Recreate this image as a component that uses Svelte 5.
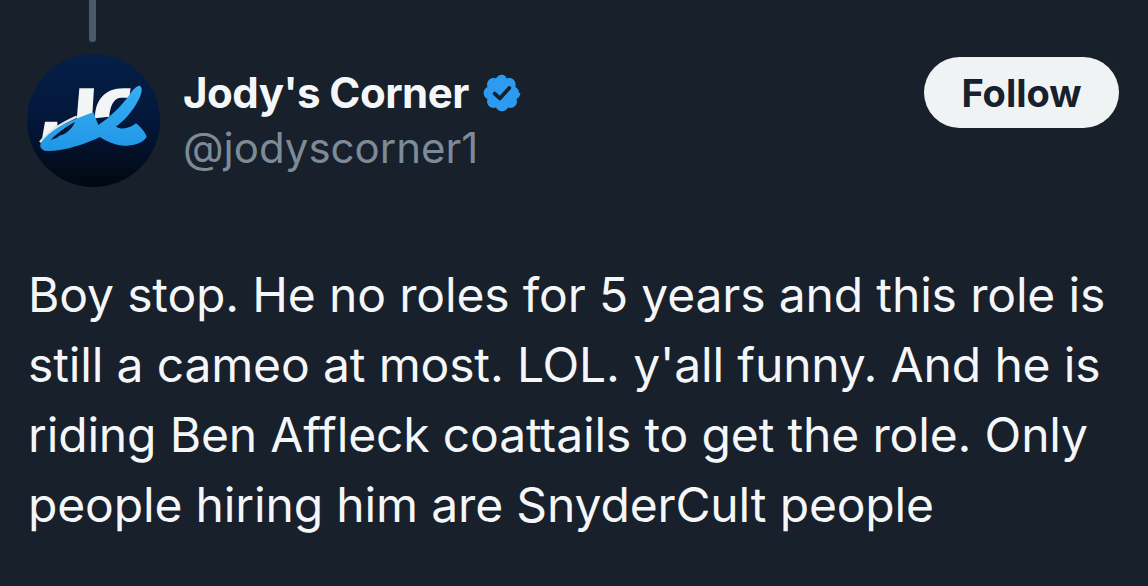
<script>
    let lines = [
        "Boy stop. He no roles for 5 years and this role is",
        "still a cameo at most. LOL. y'all funny. And he is",
        "riding Ben Affleck coattails to get the role. Only",
        "people hiring him are SnyderCult people",
    ];
</script>

<div class="tweet">
    <div class="thread-line"></div>
    <div class="header">
        <svg class="avatar" viewBox="0 0 133 133" aria-hidden="true">
            <defs>
                <linearGradient id="bg" x1="0" y1="0" x2="0" y2="1">
                    <stop offset="0" stop-color="#051f47" />
                    <stop offset="0.5" stop-color="#03173a" />
                    <stop offset="1" stop-color="#020812" />
                </linearGradient>
                <linearGradient id="swoosh" x1="0" y1="0" x2="0" y2="1">
                    <stop offset="0" stop-color="#38aef2" />
                    <stop offset="1" stop-color="#1f97e6" />
                </linearGradient>
            </defs>
            <circle cx="66.5" cy="66.5" r="66.5" fill="url(#bg)" />
            <g transform="translate(3 21) scale(0.3333)">
                <!-- logo: white letter shapes behind the blue swoosh -->
                <path fill="#f3f4f5" d="M148 40 L192 40 L186 135 L140 135 Z" />
                <path fill="#f3f4f5" d="M45 140 L82 140 L82 170 L35 198 Z" />
                <path fill="#f3f4f5" d="M195 130 C195 75 225 40 280 40 L302 40 L298 68 L272 68 C250 70 240 95 238 125 Z" />
                <path fill="none" stroke="#dfe3e6" stroke-width="7" d="M30 202 C55 170 95 145 140 125" />
                <path
                    fill="url(#swoosh)"
                    d="M32 205 C60 165 110 140 190 112 L205 150 C235 130 275 95 305 50 C312 40 322 32 330 32 C340 40 335 60 320 85 C305 112 280 140 258 155 C275 165 300 160 318 145 C330 155 345 170 350 185 C340 205 310 212 280 212 C255 210 230 200 210 186 C170 205 110 228 50 228 C35 228 28 215 32 205 Z"
                />
                <path fill="#04152f" d="M62 195 C85 170 110 155 135 140 C125 165 105 178 88 182 C80 190 70 192 62 195 Z" />
            </g>
        </svg>
        <div class="names">
            <div class="name-row">
                <span class="name">Jody's Corner</span>
                <svg class="badge" viewBox="0 0 22 22" aria-hidden="true">
                    <path
                        fill="#2c9bf0"
                        d="M20.4 11c0-1.4-.8-2.7-2.1-3.3.5-1.3.2-2.9-.8-3.9s-2.6-1.3-3.9-.8C13 1.700 12.400.9 11 .9s-2.700.8-3.300 2.100c-1.300-.5-2.900-.2-3.900.8s-1.300 2.600-.8 3.900C1.700 8.300.9 9.600.9 11s.8 2.700 2.100 3.300c-.5 1.300-.2 2.900.8 3.900s2.600 1.300 3.900.8c.6 1.300 1.900 2.100 3.300 2.100s2.700-.8 3.300-2.100c1.300.5 2.900.2 3.900-.8s1.300-2.600.8-3.900c1.300-.6 2.100-1.900 2.100-3.300z"
                    />
                    <path
                        fill="none"
                        stroke="#17202b"
                        stroke-width="2.100"
                        stroke-linecap="round"
                        stroke-linejoin="round"
                        d="M7 11.300l2.800 2.700 5.200-5.800"
                    />
                </svg>
            </div>
            <div class="handle">@jodyscorner1</div>
        </div>
        <div class="follow">Follow</div>
    </div>
    <div class="body">
        {#each lines as line}
            <div>{line}</div>
        {/each}
    </div>
</div>

<style>
    :global(body) {
        margin: 0;
        background: #17202b;
    }

    .tweet {
        width: 1148px;
        height: 586px;
        background: #17202b;
        font-family: Inter, "Liberation Sans", sans-serif;
        overflow: hidden;
    }

    .thread-line {
        width: 7px;
        height: 42px;
        margin-left: 89px;
        background: #4a5a6b;
        border-radius: 0 0 3px 3px;
    }

    .header {
        display: flex;
        align-items: flex-start;
        margin-top: 12px;
        padding: 0 29px 0 27px;
    }

    .avatar {
        width: 133px;
        height: 133px;
        flex: none;
    }

    .names {
        margin-left: 23px;
        margin-top: 11px;
        flex: 1;
    }

    .name-row {
        display: flex;
        align-items: center;
        gap: 13px;
        height: 56px;
    }

    .name {
        font-size: 42px;
        line-height: 56px;
        font-weight: 700;
        letter-spacing: -0.5px;
        color: #f4f6f8;
    }

    .badge {
        width: 40px;
        height: 40px;
    }

    .handle {
        font-size: 42px;
        color: #7d8a97;
        line-height: 50px;
        margin-top: 2px;
    }

    .follow {
        width: 195px;
        height: 71px;
        margin-top: 3px;
        border-radius: 36px;
        background: #eff3f4;
        color: #17202b;
        font-size: 38px;
        font-weight: 700;
        display: flex;
        align-items: center;
        justify-content: center;
    }

    .body {
        margin-top: 73px;
        padding-left: 28px;
        font-size: 48px;
        line-height: 70px;
        letter-spacing: -0.15px;
        color: #f4f6f8;
        white-space: nowrap;
    }
</style>
